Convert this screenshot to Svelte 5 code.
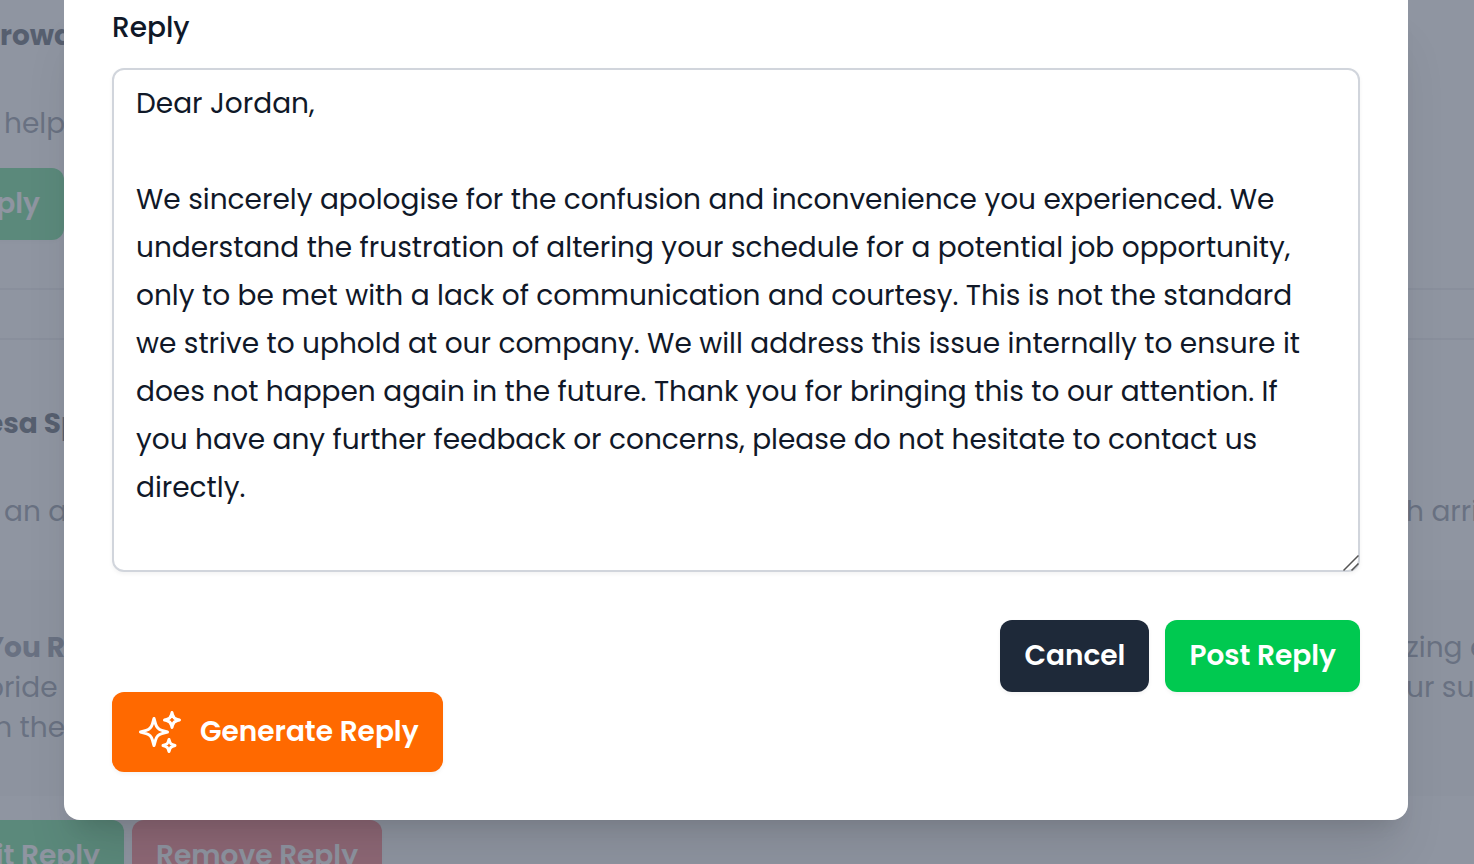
<script>
  let reply = `Dear Jordan,

We sincerely apologise for the confusion and inconvenience you experienced. We
understand the frustration of altering your schedule for a potential job opportunity,
only to be met with a lack of communication and courtesy. This is not the standard
we strive to uphold at our company. We will address this issue internally to ensure it
does not happen again in the future. Thank you for bringing this to our attention. If
you have any further feedback or concerns, please do not hesitate to contact us
directly.`;

  let open = true;

  function close() {
    open = false;
  }
</script>

<div class="page">
  <main class="reviews" inert>
    <section class="review first">
      <h2>rowd</h2>
      <p class="comment indent">help</p>
      <div class="side">
        <button class="btn green">Reply</button>
      </div>
    </section>

    <section class="review second">
      <div class="side name"><h2>esa Sp</h2></div>
      <div class="comment split">
        <p class="indent">an a</p>
        <p class="right">h arri</p>
      </div>
      <div class="answer">
        <div class="lines">
          <strong>You R</strong>
          <span>pride&nbsp;</span>
          <span>n the</span>
        </div>
        <div class="lines right">
          <span>zing e</span>
          <span>ur sup</span>
        </div>
      </div>
      <div class="review-actions">
        <div class="edit"><button class="btn green">Edit Reply</button></div>
        <button class="btn red">Remove Reply</button>
      </div>
    </section>
  </main>

  {#if open}
    <div class="overlay">
      <div class="modal" role="dialog" aria-modal="true">
        <label for="reply">Reply</label>
        <div class="field">
          <textarea id="reply" rows="10" spellcheck="false" bind:value={reply}></textarea>
          <svg class="grip" viewBox="0 0 16 16" aria-hidden="true">
            <path d="M0.5 15.5L15.5 0.5M8.5 15.5L15.5 8.5" />
          </svg>
        </div>

        <div class="actions">
          <button class="btn dark" on:click={close}>Cancel</button>
          <button class="btn post">Post Reply</button>
        </div>

        <button class="btn generate">
          <svg viewBox="0 0 24 24" aria-hidden="true">
            <path d="M9.813 15.904L9 18.75l-.813-2.846a4.5 4.5 0 00-3.09-3.09L2.25 12l2.846-.813a4.5 4.5 0 003.09-3.09L9 5.25l.813 2.846a4.5 4.5 0 003.09 3.09L15.75 12l-2.846.813a4.5 4.5 0 00-3.09 3.09z" />
            <path d="M18.259 8.715L18 9.75l-.259-1.035a3.375 3.375 0 00-2.455-2.456L14.25 6l1.036-.259a3.375 3.375 0 002.455-2.456L18 2.25l.259 1.035a3.375 3.375 0 002.456 2.456L21.75 6l-1.035.259a3.375 3.375 0 00-2.456 2.456z" />
            <path d="M16.894 20.567L16.5 21.75l-.394-1.183a2.25 2.25 0 00-1.423-1.423L13.5 18.75l1.183-.394a2.25 2.25 0 001.423-1.423l.394-1.183.394 1.183a2.25 2.25 0 001.423 1.423l1.183.394-1.183.394a2.25 2.25 0 00-1.423 1.423z" />
          </svg>
          Generate Reply
        </button>
      </div>
    </div>
  {/if}
</div>

<style>
  :global(body) {
    font-family: Poppins, Inter, "Open Sans", sans-serif;
    font-size: 28px;
    line-height: 40px;
    color: #101828;
  }

  .page {
    position: relative;
    height: 100vh;
    overflow: hidden;
    background: #fff;
  }

  /* Reviews behind the modal */
  h2,
  p {
    margin: 0;
    font-size: 28px;
    white-space: nowrap;
  }

  h2 {
    font-weight: 700;
    color: #1e2939;
  }

  .first {
    padding: 16px 0 48px;
    border-bottom: 2px solid #e5e7eb;
  }

  .second {
    margin-top: 48px;
    padding-top: 64px;
    border-top: 2px solid #e5e7eb;
  }

  .comment {
    margin: 48px 0 24px;
    color: #6a7282;
  }

  .split {
    display: flex;
    justify-content: space-between;
    margin-bottom: 48px;
  }

  .indent {
    padding-left: 4px;
  }

  .side {
    display: flex;
    justify-content: flex-end;
    width: 64px;
  }

  .name {
    width: 80px;
  }

  .right {
    width: 68px;
  }

  .answer {
    display: flex;
    justify-content: space-between;
    padding: 48px 0;
    background: #f6f8f8;
    color: #6a7282;
  }

  .lines {
    display: flex;
    flex-direction: column;
    align-items: flex-end;
    width: 65px;
    white-space: nowrap;
  }

  .lines.right {
    align-items: flex-start;
    width: 68px;
  }

  .review-actions {
    display: flex;
    gap: 8px;
    margin-top: 24px;
  }

  .edit {
    display: flex;
    justify-content: flex-end;
    width: 124px;
  }

  /* Buttons */
  .btn {
    flex-shrink: 0;
    padding: 16px 24px;
    border: none;
    border-radius: 12px;
    font-family: inherit;
    font-size: 28px;
    font-weight: 600;
    line-height: 40px;
    color: #fff;
    white-space: nowrap;
    box-shadow: 0 2px 4px rgba(0, 0, 0, 0.05);
    cursor: pointer;
  }

  .green {
    background: #30d068;
  }

  .red {
    background: #fb4c54;
  }

  .dark {
    background: #1e2939;
  }

  .post {
    background: #00c950;
  }

  .generate {
    display: flex;
    align-items: center;
    gap: 16px;
    background: #ff6900;
  }

  .generate svg {
    width: 48px;
    height: 48px;
    fill: none;
    stroke: #fff;
    stroke-width: 1.5;
    stroke-linecap: round;
    stroke-linejoin: round;
  }

  /* Modal */
  .overlay {
    position: absolute;
    inset: 0;
    padding: 0 66px 0 64px;
    background: rgba(106, 114, 130, 0.75);
  }

  .modal {
    padding: 8px 48px 48px;
    border-radius: 0 0 16px 16px;
    background: #fff;
    box-shadow: 0 40px 50px -10px rgba(0, 0, 0, 0.1), 0 16px 20px -12px rgba(0, 0, 0, 0.1);
  }

  label {
    display: block;
    margin-bottom: 20px;
    font-weight: 500;
  }

  .field {
    position: relative;
  }

  textarea {
    display: block;
    box-sizing: border-box;
    width: 100%;
    padding: 10px 22px;
    border: 2px solid #d1d5dc;
    border-radius: 12px;
    background: #fff;
    box-shadow: 0 2px 4px rgba(0, 0, 0, 0.05);
    color: #101828;
    font-family: inherit;
    font-size: 28px;
    line-height: 48px;
    resize: none;
    outline: none;
    overflow: hidden;
  }

  .grip {
    position: absolute;
    right: 1px;
    bottom: 1px;
    width: 16px;
    height: 16px;
    fill: none;
    stroke: #555;
    stroke-width: 1.5;
    pointer-events: none;
  }

  .actions {
    display: flex;
    justify-content: flex-end;
    gap: 16px;
    margin-top: 48px;
  }
</style>
